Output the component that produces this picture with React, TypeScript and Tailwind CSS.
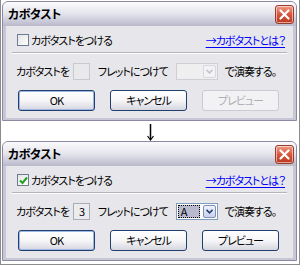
const jp = "[font-family:'Noto_Sans_CJK_JP','Noto_Sans',sans-serif] [font-feature-settings:'palt'] whitespace-nowrap"

function CloseButton() {
  return (
    <div className="flex h-[19px] w-[19px] items-center justify-center rounded-[3px] border border-[#9a3a2a] bg-gradient-to-b from-[#ee9a86] via-[#d8553c] to-[#b8381f] shadow-[inset_0_0_0_1px_rgba(255,255,255,0.55)]">
      <svg width="11" height="11" viewBox="0 0 11 11">
        <path d="M1.5 1.5 L9.5 9.5 M9.5 1.5 L1.5 9.5" stroke="white" strokeWidth="2.2" strokeLinecap="round" />
      </svg>
    </div>
  )
}

function Checkbox({ checked }: { checked: boolean }) {
  return (
    <div className="flex h-[12px] w-[12px] items-center justify-center border border-[#6b7c94] bg-gradient-to-br from-[#e4e4e4] to-white">
      {checked && (
        <svg width="9" height="9" viewBox="0 0 9 9">
          <path d="M1 4.5 L3.5 7 L8 1.5" fill="none" stroke="#22a022" strokeWidth="2" />
        </svg>
      )}
    </div>
  )
}

function Btn({ label, enabled, focus }: { label: string; enabled: boolean; focus?: boolean }) {
  if (!enabled) {
    return (
      <div className="flex h-[21px] w-[77px] items-center justify-center rounded-[3px] border border-[#cbcbd2] bg-[#f2f2f4] text-[#aeaeb4]">
        {label}
      </div>
    )
  }
  return (
    <div
      className={
        'flex h-[21px] w-[77px] items-center justify-center rounded-[3px] border border-[#1f3f6e] bg-gradient-to-b from-white via-[#f6f6f8] to-[#d6d6e0] text-black ' +
        (focus ? 'shadow-[inset_0_0_0_1px_#9fb7e2]' : '')
      }
    >
      {label}
    </div>
  )
}

function Dialog({ on }: { on: boolean }) {
  return (
    <div className={'ml-[1px] mr-[2px] h-[120px] overflow-hidden rounded-t-[6px] border border-[#8a8aa2] bg-[#c7c7d6] text-[11px] tracking-[-1px] ' + jp}>
      {/* title bar */}
      <div className="flex h-[24px] items-center justify-between bg-gradient-to-b from-[#fbfbfd] via-[#e4e4ec] to-[#b9b9cc] pl-[5px] pr-[2px]">
        <span className="text-[12px] font-bold tracking-[-0.5px] text-black">カボタスト</span>
        <CloseButton />
      </div>
      {/* body */}
      <div className="mx-[3px] h-[92px] bg-[#e7e7eb] pt-[7px]">
        <div className="flex h-[14px] items-center justify-between pl-[11px] pr-[8px]">
          <div className="flex items-center gap-[2px]">
            <Checkbox checked={on} />
            <span className="text-black">カボタストをつける</span>
          </div>
          <span className="text-[#0000ff] underline underline-offset-2">→カボタストとは？</span>
        </div>
        <div className="mx-[6px] mt-[5px] border-t border-b border-t-[#b3b3bd] border-b-white" />
        <div className="mt-[9px] flex h-[17px] items-center pl-[10px] text-black">
          <span>カボタストを</span>
          <div
            className={
              'ml-[4px] flex h-[17px] w-[17px] items-center justify-center border ' +
              (on ? 'border-[#a7acb8] bg-[#ececee]' : 'border-[#c9c9d1] bg-[#e9e9ec]')
            }
          >
            {on ? '3' : ''}
          </div>
          <span className="ml-[8px]">フレットにつけて</span>
          <div
            className={
              'ml-[8px] flex h-[17px] w-[42px] items-center border p-[1px] ' +
              (on ? 'border-[#7f9db9] bg-white' : 'border-[#cfcfd6] bg-[#efefef]')
            }
          >
            <div className="flex h-full flex-1 items-center">
              {on && (
                <span className="flex h-[13px] w-[22px] items-center border border-dotted border-black bg-[#b9b9cf] pl-[2px] leading-none">A</span>
              )}
            </div>
            <div
              className={
                'flex h-[13px] w-[13px] items-center justify-center rounded-[2px] border ' +
                (on ? 'border-[#7f8fb9] bg-gradient-to-b from-[#eef2fc] to-[#c8d2ee]' : 'border-[#d8d8de] bg-[#f3f3f5]')
              }
            >
              <svg width="7" height="5" viewBox="0 0 7 5">
                <path d="M0.5 0.8 L3.5 3.8 L6.5 0.8" fill="none" stroke={on ? '#2b3f6e' : '#c4c4cc'} strokeWidth="1.6" />
              </svg>
            </div>
          </div>
          <span className="ml-[7px]">で演奏する。</span>
        </div>
        <div className="mt-[10px] flex gap-[15px] pl-[12px]">
          <Btn label="OK" enabled focus />
          <Btn label="キャンセル" enabled />
          <Btn label="プレビュー" enabled={on} />
        </div>
      </div>
    </div>
  )
}

export default function App() {
  return (
    <div className="flex h-[265px] w-[300px] flex-col border-x border-b border-[#8c8c8c] bg-white pt-[1px]">
      <Dialog on={false} />
      <div className="flex h-[20px] justify-center">
        <svg width="7" height="18" viewBox="0 0 7 18" className="mt-[3px]">
          <path d="M3.5 0 V15" stroke="black" strokeWidth="1.5" />
          <path d="M0.5 12 L3.5 16 L6.5 12" fill="none" stroke="black" strokeWidth="1.2" />
        </svg>
      </div>
      <Dialog on />
    </div>
  )
}
